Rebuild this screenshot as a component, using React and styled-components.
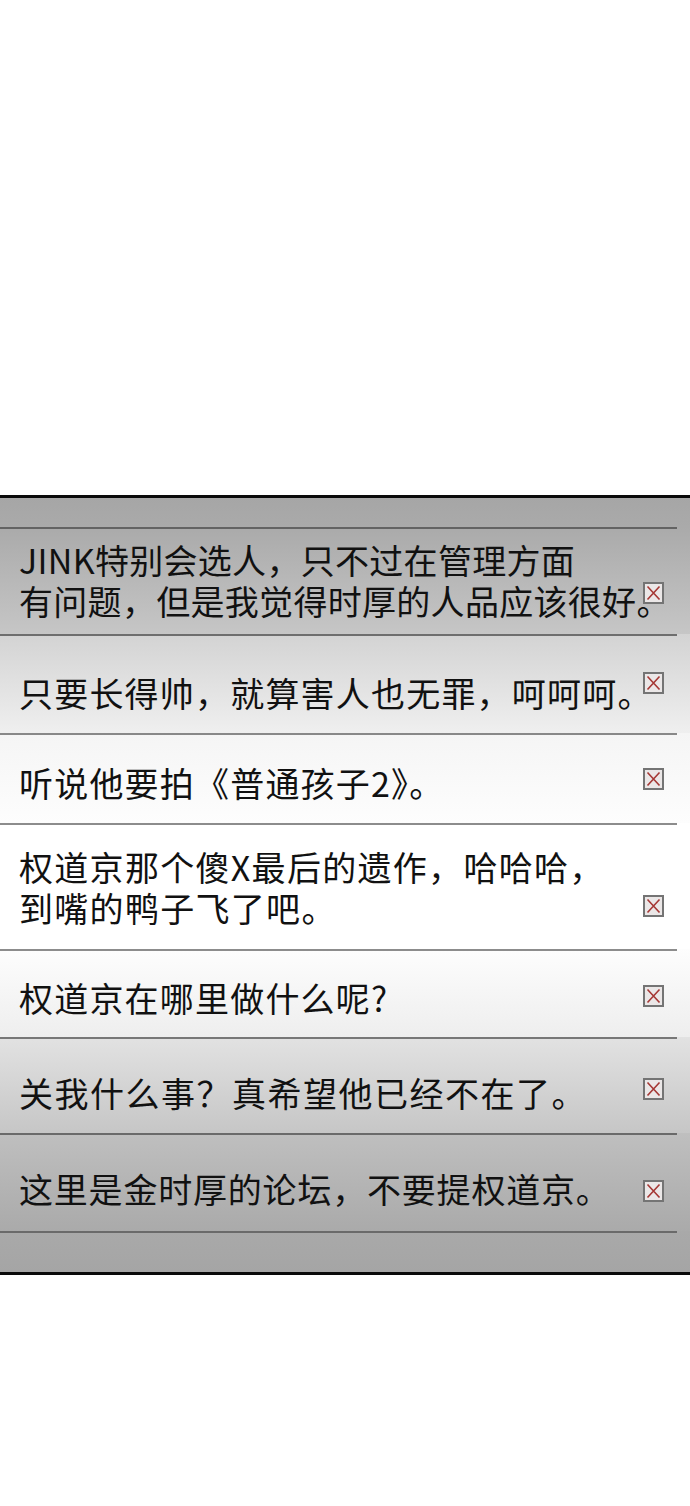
import React from "react";
import styled, { createGlobalStyle } from "styled-components";

const GlobalStyle = createGlobalStyle`
	html, body {
		margin: 0;
		padding: 0;
		background: #ffffff;
	}
	body {
		font-family: "Noto Sans CJK SC", "Noto Sans", sans-serif;
	}
`;

const Page = styled.div`
	width: 690px;
	min-height: 1506px;
	padding-top: 495px;
	box-sizing: border-box;
	background: #ffffff;
`;

const Panel = styled.section`
	display: flex;
	flex-direction: column;
	border-top: 3px solid #0a0a0a;
	border-bottom: 3px solid #0a0a0a;
	background: #a8a8a8;
`;

const Band = styled.div`
	height: ${(p) => p.$h}px;
	background-image: ${(p) =>
			p.$divider ? "linear-gradient(#6a6a6a, #6a6a6a)," : ""}
		linear-gradient(${(p) => p.$from}, ${(p) => p.$to});
	background-size: ${(p) => (p.$divider ? "677px 2px," : "")} 100% 100%;
	background-repeat: no-repeat;
`;

const Row = styled.div`
	display: flex;
	align-items: flex-start;
	box-sizing: border-box;
	height: ${(p) => p.$h}px;
	padding: 0 26px 0 19px;
	background-image: linear-gradient(${(p) => p.$line}, ${(p) => p.$line}),
		linear-gradient(${(p) => p.$from}, ${(p) => p.$to});
	background-size: 677px 2px, 100% 100%;
	background-repeat: no-repeat;
`;

const Message = styled.p`
	flex: 1;
	min-width: 0;
	margin: 0;
	padding-top: ${(p) => p.$top}px;
	font-size: 34px;
	line-height: 41px;
	letter-spacing: ${(p) => p.$spacing}px;
	color: #111111;
	white-space: nowrap;
`;

const Line = styled.span`
	display: block;
	height: 41px;
`;

const Close = styled.span`
	position: relative;
	z-index: 1;
	flex: none;
	display: flex;
	align-items: center;
	justify-content: center;
	width: 21px;
	height: 22px;
	margin-top: ${(p) => p.$top}px;
	box-sizing: border-box;
	border: 2px solid #747474;
	background: #ebe7e7;
`;

const CloseIcon = () => (
	<svg width="15" height="16" viewBox="0 0 15 16">
		<path d="M1.5 1.5 L13.5 14.5 M13.5 1.5 L1.5 14.5" stroke="#a53734" strokeWidth="1.6" fill="none" />
	</svg>
);

const messages = [
	{
		lines: ["JINK特别会选人，只不过在管理方面", "有问题，但是我觉得时厚的人品应该很好。"],
		h: 107, top: 12, icon: 55, spacing: 0.3, from: "#aaaaaa", to: "#c6c6c6", line: "#636363",
	},
	{
		lines: ["只要长得帅，就算害人也无罪，呵呵呵。"],
		h: 99, top: 38, icon: 38, spacing: 1.2, from: "#d3d3d3", to: "#efefef", line: "#6e6e6e",
	},
	{
		lines: ["听说他要拍《普通孩子2》。"],
		h: 90, top: 29, icon: 35, spacing: 1.2, from: "#f5f5f5", to: "#fdfdfd", line: "#888888",
	},
	{
		lines: ["权道京那个傻X最后的遗作，哈哈哈，", "到嘴的鸭子飞了吧。"],
		h: 126, top: 23, icon: 72, spacing: 1.3, from: "#ffffff", to: "#ffffff", line: "#8c8c8c",
	},
	{
		lines: ["权道京在哪里做什么呢?"],
		h: 88, top: 28, icon: 36, spacing: 1.2, from: "#fdfdfd", to: "#eeeeee", line: "#8c8c8c",
	},
	{
		lines: ["关我什么事？真希望他已经不在了。"],
		h: 96, top: 35, icon: 41, spacing: 1.5, from: "#e2e2e2", to: "#c6c6c6", line: "#777777",
	},
	{
		lines: ["这里是金时厚的论坛，不要提权道京。"],
		h: 98, top: 35, icon: 47, spacing: 0.8, from: "#bfbfbf", to: "#aaaaaa", line: "#6a6a6a",
	},
];

export default function App() {
	return (
		<>
			<GlobalStyle />
			<Page>
				<Panel>
					<Band $h={29} $from="#a6a6a6" $to="#aaaaaa" />
					{messages.map((m, i) => (
						<Row key={i} $h={m.h} $from={m.from} $to={m.to} $line={m.line}>
							<Message $top={m.top} $spacing={m.spacing}>
								{m.lines.map((l, j) => (
									<Line key={j}>{l}</Line>
								))}
							</Message>
							<Close $top={m.icon}>
								<CloseIcon />
							</Close>
						</Row>
					))}
					<Band $h={41} $divider $from="#a9a9a9" $to="#a5a5a5" />
				</Panel>
			</Page>
		</>
	);
}
